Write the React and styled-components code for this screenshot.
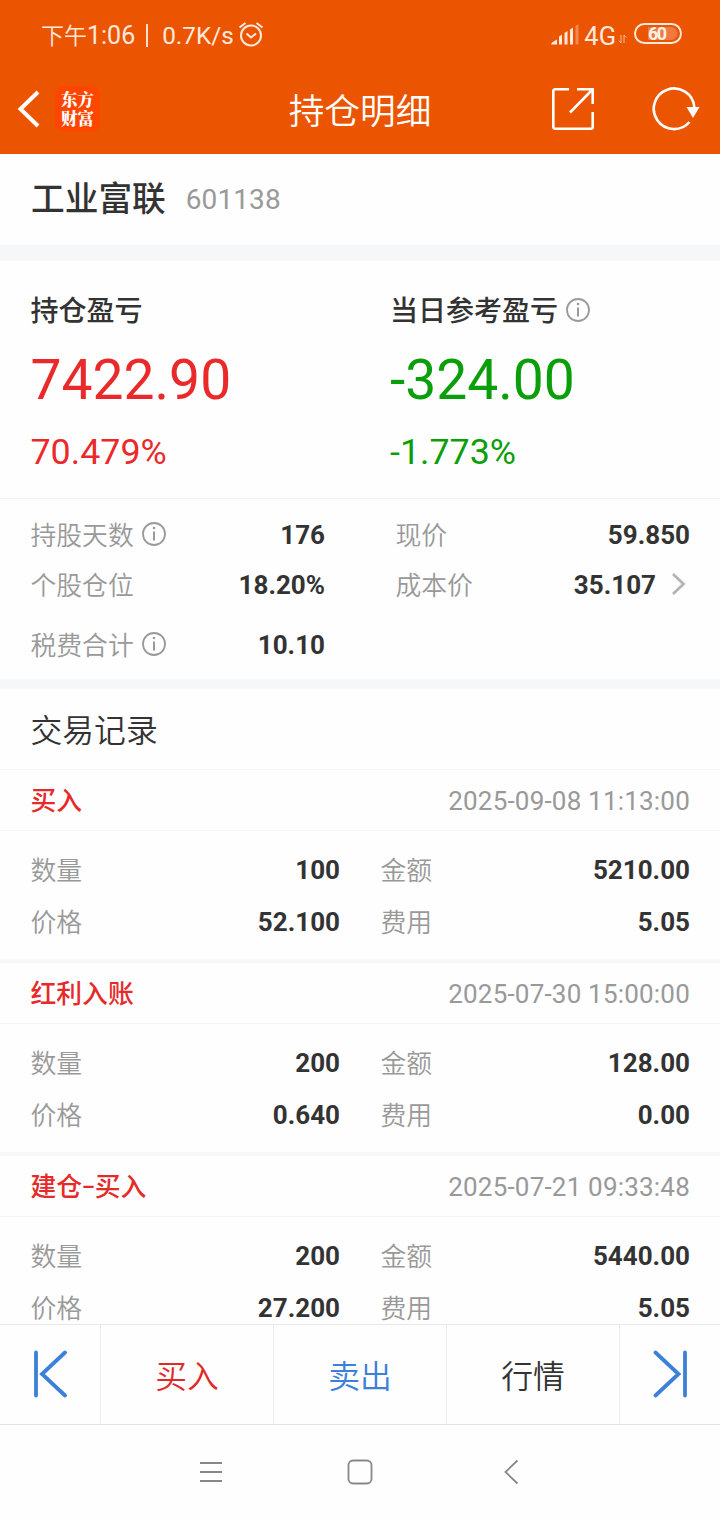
import React from "react";
import styled, { createGlobalStyle } from "styled-components";

const GlobalStyle = createGlobalStyle`
  * {
    box-sizing: border-box;
  }
  body {
    margin: 0;
    background-color: #fff;
    font-family: Roboto, "Noto Sans CJK SC", sans-serif;
    color: #333;
  }
`;

const Screen = styled.div`
  display: flex;
  flex-direction: column;
  width: 720px;
  height: 1520px;
  overflow: hidden;
  background-color: #fefefe;
`;

const Header = styled.header`
  flex: none;
  height: 154px;
  background-color: #eb5502;
  color: #fff;
`;

const StatusBar = styled.div`
  display: flex;
  align-items: center;
  justify-content: space-between;
  height: 66px;
  padding: 3px 38px 0 41px;
  color: #ffe9dc;
`;

const StatusGroup = styled.div`
  display: flex;
  align-items: center;
`;

const StatusText = styled.span`
  padding-top: ${(props) => props.top || 2}px;
  margin-right: ${(props) => props.gap || 0}px;
  font-size: ${(props) => props.size || 25}px;
  font-weight: ${(props) => props.weight || 400};
  line-height: 30px;
`;

const StatusDivider = styled.span`
  width: 2px;
  height: 23px;
  margin: 2px 14px 0 11px;
  background-color: #ffe0cd;
`;

const NavBar = styled.div`
  display: grid;
  grid-template-columns: 1fr auto 1fr;
  align-items: center;
  height: 88px;
  padding: 0 20px 2px 17px;
`;

const NavSide = styled.div`
  display: flex;
  align-items: center;
  justify-content: ${(props) => (props.end ? "flex-end" : "flex-start")};
  gap: ${(props) => props.gap}px;
`;

const AppLogo = styled.div`
  width: 45px;
  height: 46px;
  padding: 4px 6px;
  border-radius: 9px;
  background-color: #ff4600;
  font-family: "Noto Serif CJK SC", "Noto Sans CJK SC", sans-serif;
  font-size: 16.5px;
  font-weight: 900;
  line-height: 19px;
`;

const Title = styled.h1`
  margin: 0;
  padding: 6px 0 0 3px;
  font-size: 35.7px;
  font-weight: 350;
  line-height: 48px;
`;

const StockBar = styled.div`
  display: flex;
  flex: none;
  align-items: center;
  gap: 20px;
  height: 91px;
  padding: 0 31px;
`;

const StockName = styled.span`
  font-size: 33.7px;
  font-weight: 500;
  line-height: 50px;
`;

const StockCode = styled.span`
  font-size: 28px;
  letter-spacing: 0.1px;
  color: #999;
`;

const Band = styled.div`
  flex: none;
  height: ${(props) => props.size}px;
  background-color: #f6f7f9;
`;

const ProfitRow = styled.section`
  display: grid;
  flex: none;
  grid-template-columns: 359.5px 1fr;
  height: 238px;
  padding: 29px 30px 0 30.5px;
  border-bottom: 1px solid #f3f3f4;
`;

const Profit = styled.div`
  color: ${(props) => (props.down ? "#0a9f0a" : "#ea2a2a")};
`;

const ProfitLabel = styled.div`
  display: flex;
  align-items: center;
  gap: 8px;
  height: 42px;
  font-size: 28px;
  font-weight: 500;
  line-height: 40px;
  color: #333;
`;

const ProfitValue = styled.div`
  margin-top: 10px;
  font-size: 55.2px;
  line-height: 76px;
`;

const ProfitRate = styled.div`
  margin-top: 10px;
  font-size: 35.8px;
  line-height: 48px;
`;

const StatGrid = styled.section`
  display: grid;
  flex: none;
  grid-template-columns: 294.5px 294.5px;
  grid-template-rows: 50px 50px 70px;
  column-gap: 70.5px;
  height: 180px;
  padding: 11px 30px 0 30.5px;
`;

const Field = styled.div`
  display: flex;
  align-items: center;
  justify-content: space-between;
`;

const FieldLabel = styled.span`
  display: flex;
  align-items: center;
  gap: 8px;
  font-size: 25.8px;
  font-weight: 350;
  line-height: 40px;
  color: #999;
`;

const LabelText = styled.span`
  padding-top: 2px;
`;

const FieldValue = styled.span`
  display: flex;
  align-items: center;
  gap: 15px;
  font-size: 26px;
  font-weight: 700;
  line-height: 40px;
`;

const SectionTitle = styled.h2`
  flex: none;
  height: 81px;
  margin: 0;
  padding: 2px 30.5px 0;
  border-bottom: 1px solid #f5f5f6;
  font-size: 31.8px;
  font-weight: 350;
  line-height: 80px;
`;

const RecordList = styled.section`
  flex: 1;
  min-height: 0;
  overflow: hidden;
`;

const RecordHead = styled.div`
  display: flex;
  align-items: center;
  justify-content: space-between;
  height: 61px;
  padding: 2px 30px 0 30.5px;
  border-bottom: 1px solid #f5f5f6;
`;

const RecordType = styled.span`
  font-size: 25.8px;
  font-weight: 500;
  line-height: 40px;
  color: #e62a2a;
`;

const Dash = styled.span`
  font-size: 20px;
  font-weight: 700;
  line-height: 1;
  vertical-align: 2px;
`;

const RecordTime = styled.span`
  font-size: 26px;
  letter-spacing: 0.2px;
  color: #999;
`;

const RecordBody = styled.div`
  display: grid;
  grid-template-columns: 309.5px 309.5px;
  grid-auto-rows: 52px;
  column-gap: 40.5px;
  height: 128px;
  padding: 13px 30px 0 30.5px;
`;

const ActionBar = styled.div`
  display: grid;
  flex: none;
  grid-template-columns: 101px 173px 173px 173px 100px;
  height: 101px;
  border-top: 1px solid #e9e9e9;
  border-bottom: 1px solid #e3e3e3;
`;

const Action = styled.button`
  display: flex;
  align-items: center;
  justify-content: center;
  padding: 0 0 2px;
  border: 0;
  border-right: ${(props) => (props.last ? "0" : "1px solid #ebebeb")};
  background: none;
  font-family: inherit;
  font-size: 31.8px;
  font-weight: 350;
  color: ${(props) => props.color};
`;

const SystemNav = styled.nav`
  display: flex;
  flex: none;
  align-items: center;
  justify-content: center;
  gap: 124px;
  height: 95px;
  padding-bottom: 2px;
`;

const InfoIcon = () => (
  <svg width="24" height="26" viewBox="0 0 24 26" fill="none" stroke="#999">
    <circle cx="12" cy="12" r="11" strokeWidth="1.8" />
    <path d="M12 9.5v9" strokeWidth="2" />
    <circle cx="12" cy="6" r="0.7" strokeWidth="1.2" fill="#999" />
  </svg>
);

const AlarmIcon = () => (
  <svg width="26" height="28" viewBox="0 0 26 28" fill="none" stroke="currentColor" strokeWidth="2">
    <circle cx="13" cy="14.5" r="10" />
    <path d="M8.5 12.5l4.5 4 5-4M1.500 6.500l6-4.500M24.500 6.500l-6-4.500" />
  </svg>
);

const SignalIcon = styled(({ className }) => (
  <svg className={className} width="29" height="21" viewBox="0 0 29 21" fill="currentColor">
    <path d="M0 20.500l1-2 5-3v5zM8 12.500l3-2v10H8zM13.500 9l3-2v13.500h-3zM19 5.500l3-2v17h-3z" />
    <path d="M24.500 2l3-2v20.500h-3z" opacity="0.35" />
  </svg>
))`
  margin-right: 4px;
`;

const DataIcon = styled(({ className }) => (
  <svg className={className} width="9" height="20" viewBox="0 -9 9 20" fill="none" stroke="currentColor" opacity="0.7">
    <path d="M3 1v8L.8 6.500M6 9V1l2.200 2.500" />
  </svg>
))`
  margin-right: 7px;
`;

const BatteryIcon = () => (
  <svg width="48" height="23" viewBox="0 0 48 23">
    <rect x="1" y="1" width="46" height="19" rx="9.500" fill="none" stroke="currentColor" strokeWidth="2" />
    <path d="M14 4h23a6.500 6.500 0 0 1 0 13H14z" fill="#f0793f" />
    <text x="23.500" y="17" fill="#fff1e8" fontSize="18" fontWeight="700" textAnchor="middle" textLength="19">
      60
    </text>
  </svg>
);

const BackIcon = () => (
  <svg width="23" height="38" viewBox="0 0 23 38" fill="none" stroke="#fff" strokeWidth="4">
    <path d="M21 2L3.500 19 21 36" />
  </svg>
);

const ShareIcon = () => (
  <svg width="44" height="44" viewBox="0 0 44 44" fill="none" stroke="#fff" strokeWidth="2.600">
    <path d="M18 2.300H4a1.700 1.700 0 0 0-1.700 1.700v36a1.700 1.700 0 0 0 1.700 1.700h36a1.700 1.700 0 0 0 1.700-1.700V25" />
    <path d="M26 2.300h15.700V17M19 25.500L41 3" />
  </svg>
);

const RefreshIcon = () => (
  <svg width="48" height="44" viewBox="0 0 48 44" fill="none" stroke="#fff" strokeWidth="2.600">
    <path d="M37.500 35A20.300 20.300 0 1 1 42.300 20" />
    <path d="M34.500 20H47.500L41 31z" fill="#fff" stroke="none" />
  </svg>
);

const ChevronIcon = () => (
  <svg width="19" height="26" viewBox="0 0 19 26" fill="none" stroke="#b4b4b4" strokeWidth="2.800">
    <path d="M2 2l10.500 10L2 22" />
  </svg>
);

const FirstIcon = () => (
  <svg width="36" height="48" viewBox="0 0 36 48" fill="none" stroke="#3c80da" strokeWidth="3.800" strokeLinecap="round">
    <path d="M4 2.500v43M33 2.500L10 24l23 21.500" />
  </svg>
);

const LastIcon = () => (
  <svg width="36" height="48" viewBox="0 0 36 48" fill="none" stroke="#3c80da" strokeWidth="3.800" strokeLinecap="round">
    <path d="M33 2.500v43M3.500 2.500L26.500 24l-23 21.500" />
  </svg>
);

const stats = [
  { label: "持股天数", value: "176", info: true },
  { label: "现价", value: "59.850" },
  { label: "个股仓位", value: "18.20%" },
  { label: "成本价", value: "35.107", link: true },
  { label: "税费合计", value: "10.10", info: true },
];

const records = [
  {
    type: "买入",
    time: "2025-09-08 11:13:00",
    quantity: "100",
    amount: "5210.00",
    price: "52.100",
    fee: "5.05",
  },
  {
    type: "红利入账",
    time: "2025-07-30 15:00:00",
    quantity: "200",
    amount: "128.00",
    price: "0.640",
    fee: "0.00",
  },
  {
    stage: "建仓",
    type: "买入",
    time: "2025-07-21 09:33:48",
    quantity: "200",
    amount: "5440.00",
    price: "27.200",
    fee: "5.05",
  },
];

function DataField({ label, value, info, link }) {
  return (
    <Field>
      <FieldLabel>
        <LabelText>{label}</LabelText>
        {info && <InfoIcon />}
      </FieldLabel>
      <FieldValue>
        {value}
        {link && <ChevronIcon />}
      </FieldValue>
    </Field>
  );
}

function TradeRecord({ record }) {
  return (
    <div>
      <RecordHead>
        <RecordType>
          {record.stage && (
            <>
              {record.stage}
              <Dash>–</Dash>
            </>
          )}
          {record.type}
        </RecordType>
        <RecordTime>{record.time}</RecordTime>
      </RecordHead>
      <RecordBody>
        <DataField label="数量" value={record.quantity} />
        <DataField label="金额" value={record.amount} />
        <DataField label="价格" value={record.price} />
        <DataField label="费用" value={record.fee} />
      </RecordBody>
      <Band size={4} />
    </div>
  );
}

function App() {
  return (
    <>
      <GlobalStyle />
      <Screen>
        <Header>
          <StatusBar>
            <StatusGroup>
              <StatusText size={23} weight={350} top={4}>
                下午
              </StatusText>
              <StatusText>1:06</StatusText>
              <StatusDivider />
              <StatusText size={24.3} gap={4}>
                0.7K/s
              </StatusText>
              <AlarmIcon />
            </StatusGroup>
            <StatusGroup>
              <SignalIcon />
              <StatusText size={25.5} gap={2}>
                4G
              </StatusText>
              <DataIcon />
              <BatteryIcon />
            </StatusGroup>
          </StatusBar>
          <NavBar>
            <NavSide gap={15}>
              <BackIcon />
              <AppLogo>东方财富</AppLogo>
            </NavSide>
            <Title>持仓明细</Title>
            <NavSide end gap={57}>
              <ShareIcon />
              <RefreshIcon />
            </NavSide>
          </NavBar>
        </Header>

        <StockBar>
          <StockName>工业富联</StockName>
          <StockCode>601138</StockCode>
        </StockBar>
        <Band size={16} />

        <ProfitRow>
          <Profit>
            <ProfitLabel>
              <LabelText>持仓盈亏</LabelText>
            </ProfitLabel>
            <ProfitValue>7422.90</ProfitValue>
            <ProfitRate>70.479%</ProfitRate>
          </Profit>
          <Profit down>
            <ProfitLabel>
              <LabelText>当日参考盈亏</LabelText>
              <InfoIcon />
            </ProfitLabel>
            <ProfitValue>-324.00</ProfitValue>
            <ProfitRate>-1.773%</ProfitRate>
          </Profit>
        </ProfitRow>

        <StatGrid>
          {stats.map((stat) => (
            <DataField key={stat.label} {...stat} />
          ))}
        </StatGrid>
        <Band size={10} />

        <SectionTitle>交易记录</SectionTitle>
        <RecordList>
          {records.map((record) => (
            <TradeRecord key={record.time} record={record} />
          ))}
        </RecordList>

        <ActionBar>
          <Action>
            <FirstIcon />
          </Action>
          <Action color="#e02a2a">买入</Action>
          <Action color="#3c80da">卖出</Action>
          <Action color="#333">行情</Action>
          <Action last>
            <LastIcon />
          </Action>
        </ActionBar>

        <SystemNav>
          <svg width="24" height="24" viewBox="0 0 24 24" fill="none" stroke="#888" strokeWidth="2">
            <path d="M1 3h22M1 12h22M1 21h22" />
          </svg>
          <svg width="26" height="26" viewBox="0 0 26 26" fill="none" stroke="#888" strokeWidth="1.8">
            <rect x="1.5" y="1.5" width="23" height="23" rx="4.5" />
          </svg>
          <svg width="24" height="26" viewBox="0 0 24 26" fill="none" stroke="#888" strokeWidth="1.8">
            <path d="M20.500 1.500L8.500 13l12 11.500" />
          </svg>
        </SystemNav>
      </Screen>
    </>
  );
}

export default App;
